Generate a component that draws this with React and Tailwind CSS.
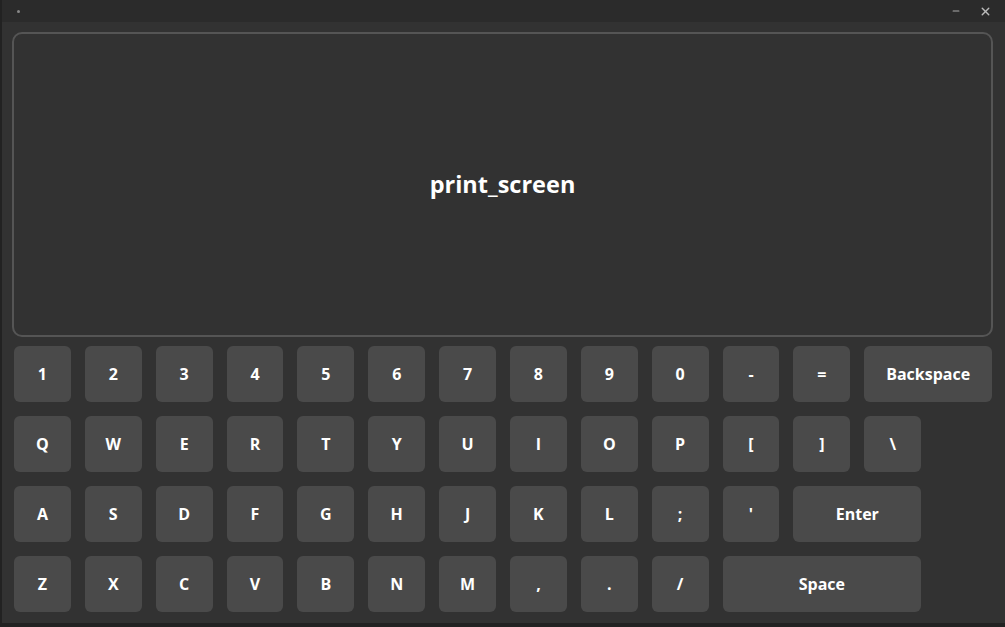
import { X, Minus } from "lucide-react";

const rows = [
  ["1", "2", "3", "4", "5", "6", "7", "8", "9", "0", "-", "=", "Backspace"],
  ["Q", "W", "E", "R", "T", "Y", "U", "I", "O", "P", "[", "]", "\\"],
  ["A", "S", "D", "F", "G", "H", "J", "K", "L", ";", "'", "Enter"],
  ["Z", "X", "C", "V", "B", "N", "M", ",", ".", "/", "Space"],
];

const wide = { Backspace: "col-span-2", Enter: "col-span-2", Space: "col-span-3" };

export default function App() {
  return (
    <div
      className="w-[1005px] h-[627px] bg-[#222] flex flex-col overflow-hidden"
      style={{ fontFamily: '"Open Sans", "Noto Sans", sans-serif' }}
    >
      <div className="flex-1 flex flex-col ml-[2px] mb-[4px] bg-[#323232]">
        {/* title bar */}
        <div className="h-[22px] bg-[#2b2b2b] flex items-center px-[15px]">
          <div className="w-[3px] h-[3px] rounded-full bg-[#888]" />
          <div className="flex-1" />
          <Minus className="w-[10px] h-[10px] text-[#aaa] mr-[18px]" strokeWidth={2.5} />
          <X className="w-[13px] h-[13px] text-[#bbb] mr-[-2px]" strokeWidth={2.5} />
        </div>

        <div className="flex-1 flex flex-col pl-[10px] pr-[12px] pt-[10px]">
          {/* display */}
          <div className="h-[305px] border-2 border-[#555] rounded-[10px] flex items-center justify-center">
            <span className="text-white text-[23.5px] font-bold">print_screen</span>
          </div>

          {/* keyboard */}
          <div className="grid grid-cols-14 gap-[14px] mt-[9px] pl-[2px] pr-[1px]">
            {rows.map((row) =>
              row.map((k) => (
                <div
                  key={k}
                  className={`${wide[k] || ""} h-[56px] bg-[#4a4a4a] rounded-[6px] flex items-center justify-center text-white text-[16px] font-bold`}
                >
                  {k}
                </div>
              ))
            ).map((keys, ri) => [
              ...keys,
              ...(ri === 0 ? [] : [<div key={"fill" + ri} />]),
            ])}
          </div>
        </div>
      </div>
    </div>
  );
}
